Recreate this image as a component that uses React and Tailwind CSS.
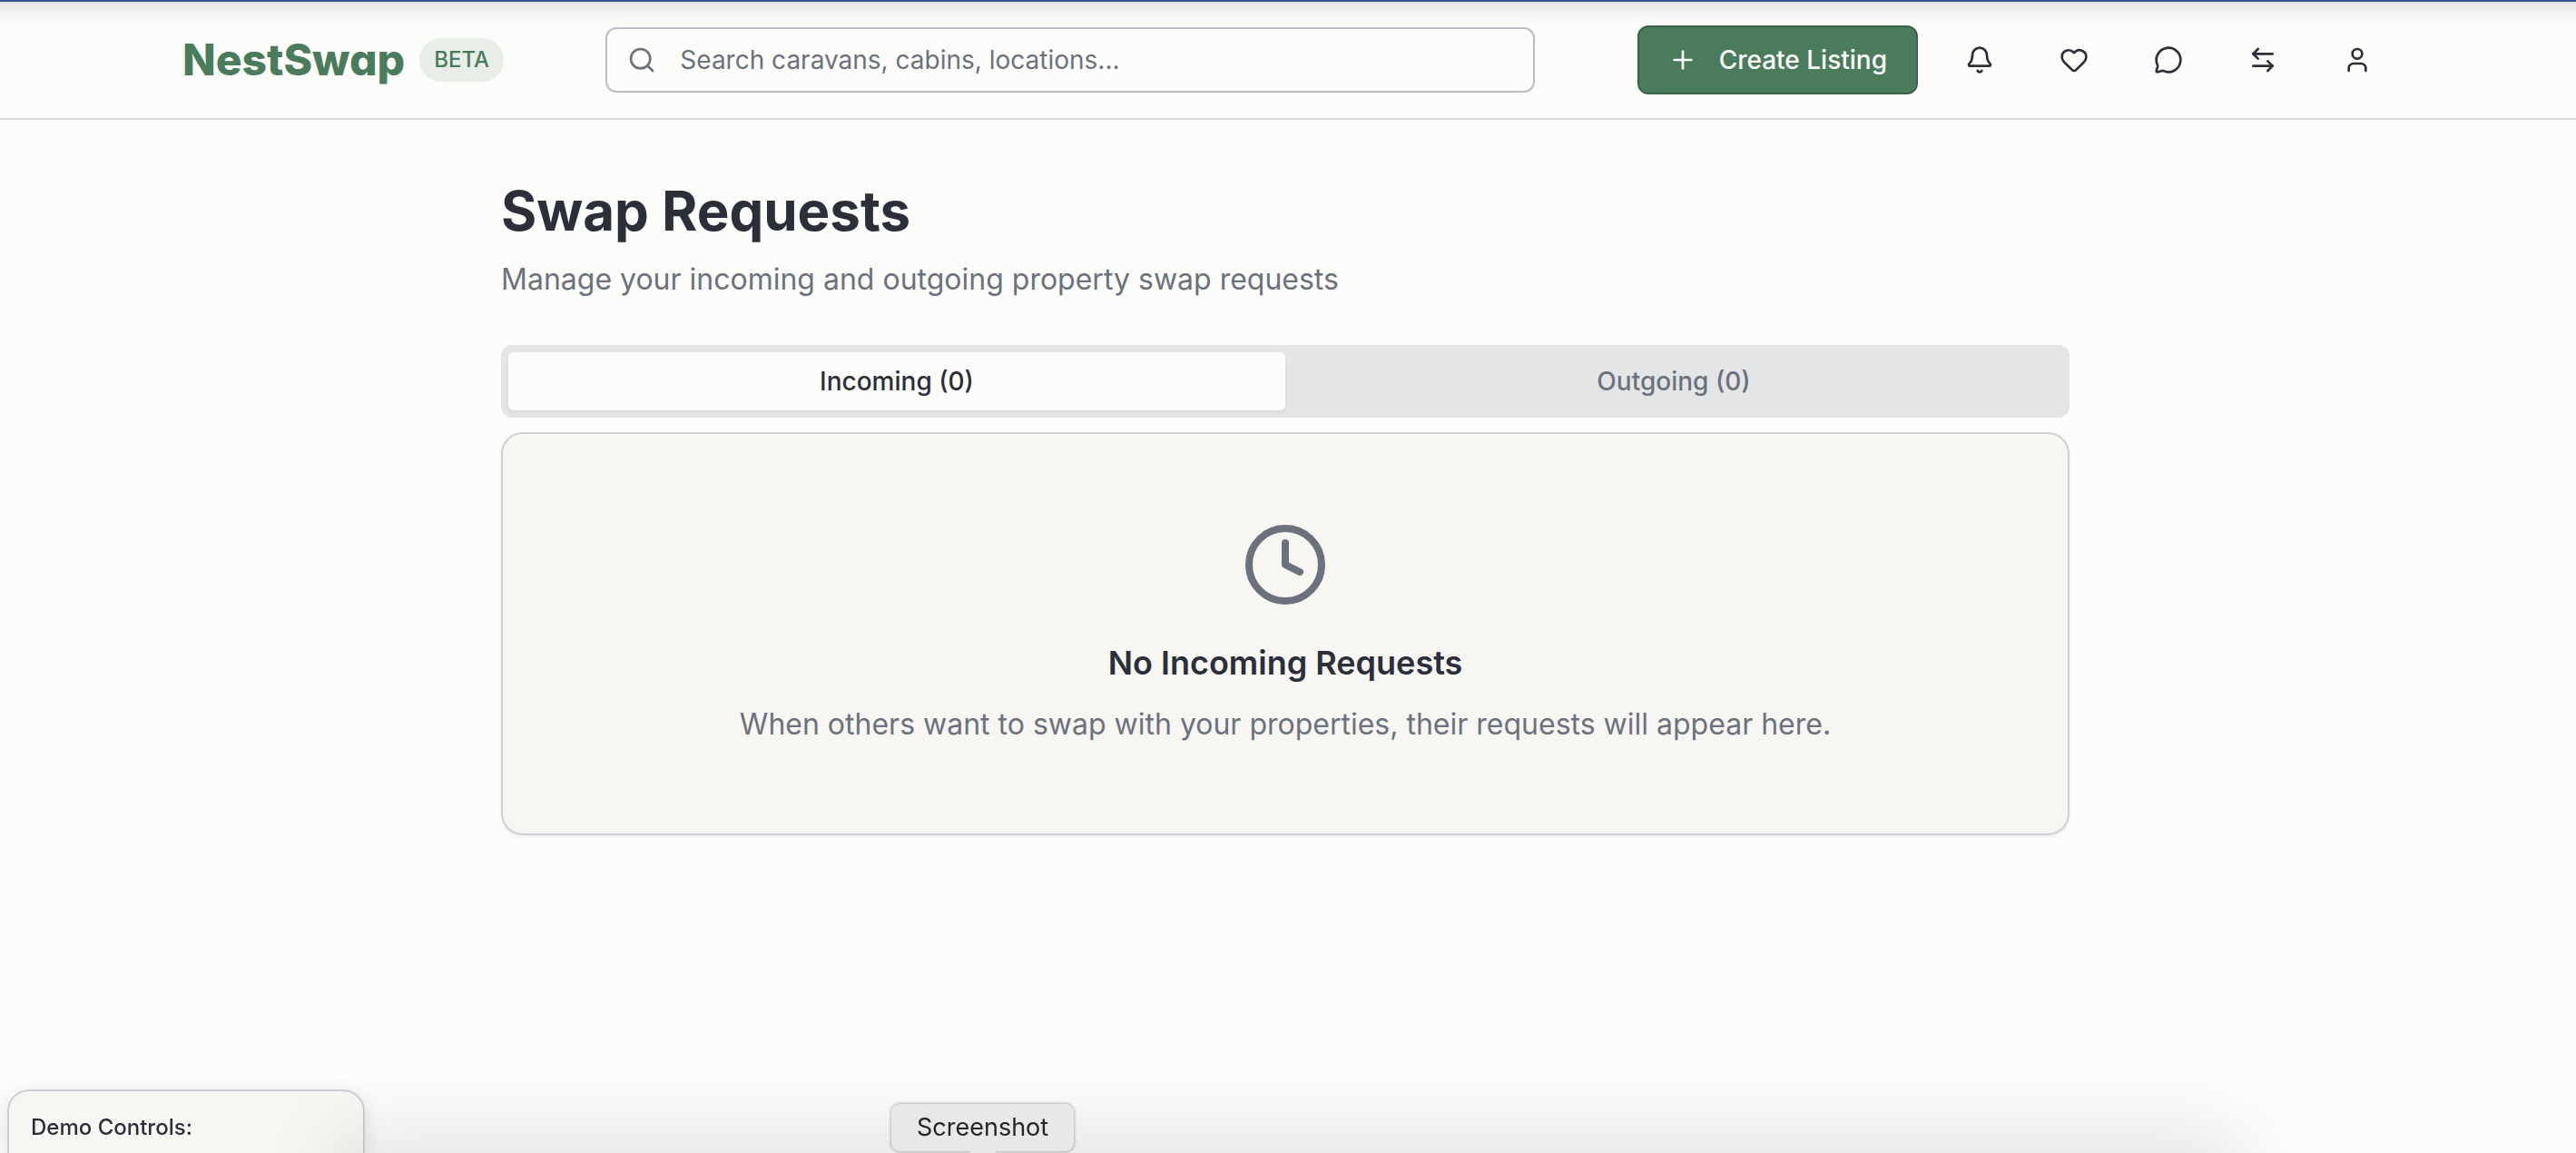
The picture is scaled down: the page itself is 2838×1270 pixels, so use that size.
import { ArrowLeftRight, Bell, Clock, Heart, MessageCircle, Plus, Search, User } from "lucide-react";

const actions = [
  { label: "Notifications", Icon: Bell },
  { label: "Favourites", Icon: Heart },
  { label: "Messages", Icon: MessageCircle },
  { label: "Swap requests", Icon: ArrowLeftRight },
  { label: "Account", Icon: User },
];

function Header() {
  return (
    <header className="border-b-2 border-[#d5d9de] border-t-2 border-t-[#35548f]">
      <div className="-mb-6 h-6 bg-linear-to-b from-[#e2e2e0] via-[#f4f4f2] to-[#fcfcfa]" />
      <div className="relative mx-auto flex h-32 max-w-[2564px] items-center justify-between px-16">
        <div className="flex items-center gap-4">
          <a
            href="#"
            className="text-5xl leading-[64px] font-extrabold text-[#4a7c5c] [font-feature-settings:'cv11']"
          >
            NestSwap
          </a>
          <span className="rounded-full bg-[#e8ede8] px-4 py-2 text-2xl leading-8 font-medium text-[#4a7c5c]">
            BETA
          </span>
        </div>

        <label className="flex h-[72px] w-full max-w-[1024px] items-center gap-[26px] rounded-xl border-2 border-[#b9bec5] px-[22px] text-[#6b727d]">
          <Search className="size-8 shrink-0" />
          <input
            type="text"
            aria-label="Search"
            placeholder="Search caravans, cabins, locations..."
            className="w-full bg-transparent text-[28px] leading-10 outline-none placeholder:text-[#6b727d]"
          />
        </label>

        <div className="flex items-center gap-7">
          <button className="flex h-[76px] items-center gap-6 rounded-xl border-2 border-[#3a6349] bg-[#4a7c5c] px-8 text-[28px] leading-10 font-medium whitespace-nowrap text-[#fcfcfa]">
            <Plus className="size-8" />
            Create Listing
          </button>
          <nav className="flex gap-6">
            {actions.map(({ label, Icon }) => (
              <button key={label} aria-label={label} className="grid size-20 place-items-center">
                <Icon className="size-8" />
              </button>
            ))}
          </nav>
        </div>
      </div>
    </header>
  );
}

function EmptyState() {
  return (
    <section className="mt-4 flex flex-col items-center rounded-3xl border-2 border-[#cdd1d7] bg-[#f7f6f3] py-24 text-center shadow-[0_2px_4px_rgba(0,0,0,0.06)]">
      <Clock className="size-24 text-[#6b727d]" />
      <h3 className="mt-8 text-4xl leading-[56px] font-semibold">No Incoming Requests</h3>
      <p className="mt-4 text-[32px] leading-[48px] text-[#6b727d]">
        When others want to swap with your properties, their requests will appear here.
      </p>
    </section>
  );
}

export default function App() {
  return (
    <div className="relative min-h-screen overflow-hidden bg-[#fcfcfa] font-['Inter',sans-serif] text-[#2b2f3a]">
      <Header />

      <div className="pr-1.5">
        <main className="mx-auto max-w-[1792px] px-8 pt-16">
          <h1 className="text-6xl leading-[72px] font-bold">Swap Requests</h1>
          <p className="mt-4 text-[32px] leading-[48px] text-[#6b727d]">
            Manage your incoming and outgoing property swap requests
          </p>

          <div role="tablist" className="mt-12 grid grid-cols-2 rounded-xl bg-[#e4e5e7] p-2 text-[28px] leading-10 font-medium">
            <button role="tab" aria-selected="true" className="rounded-md bg-[#fcfcfa] py-3 shadow-[0_2px_4px_rgba(0,0,0,0.06)]">
              Incoming (0)
            </button>
            <button role="tab" aria-selected="false" className="rounded-md py-3 text-[#6b727d]">
              Outgoing (0)
            </button>
          </div>

          <EmptyState />
        </main>
      </div>

      <aside className="fixed bottom-0 left-2 w-[394px] rounded-t-3xl border-2 border-b-0 border-[#cbcfd5] bg-[#f7f6f3] px-6 pt-6 pb-3 text-2xl leading-8 font-medium shadow-[0_8px_24px_rgba(0,0,0,0.12)]">
        Demo Controls:
      </aside>

      <div className="pointer-events-none fixed inset-x-[390px] top-full h-24 shadow-[0_0_90px_16px_rgba(0,0,0,0.11)]" />

      <div
        role="tooltip"
        className="fixed bottom-0.5 left-[982px] rounded-[9px] bg-[#e8e8e6] px-7 py-2 text-[27px] leading-9 text-[#262626] shadow-[0_0_3px_1px_rgba(0,0,0,0.25)]"
      >
        Screenshot
        <span className="absolute top-full left-1/2 h-1 w-7 -translate-x-1/2 bg-[#e8e8e6]" />
      </div>
    </div>
  );
}
